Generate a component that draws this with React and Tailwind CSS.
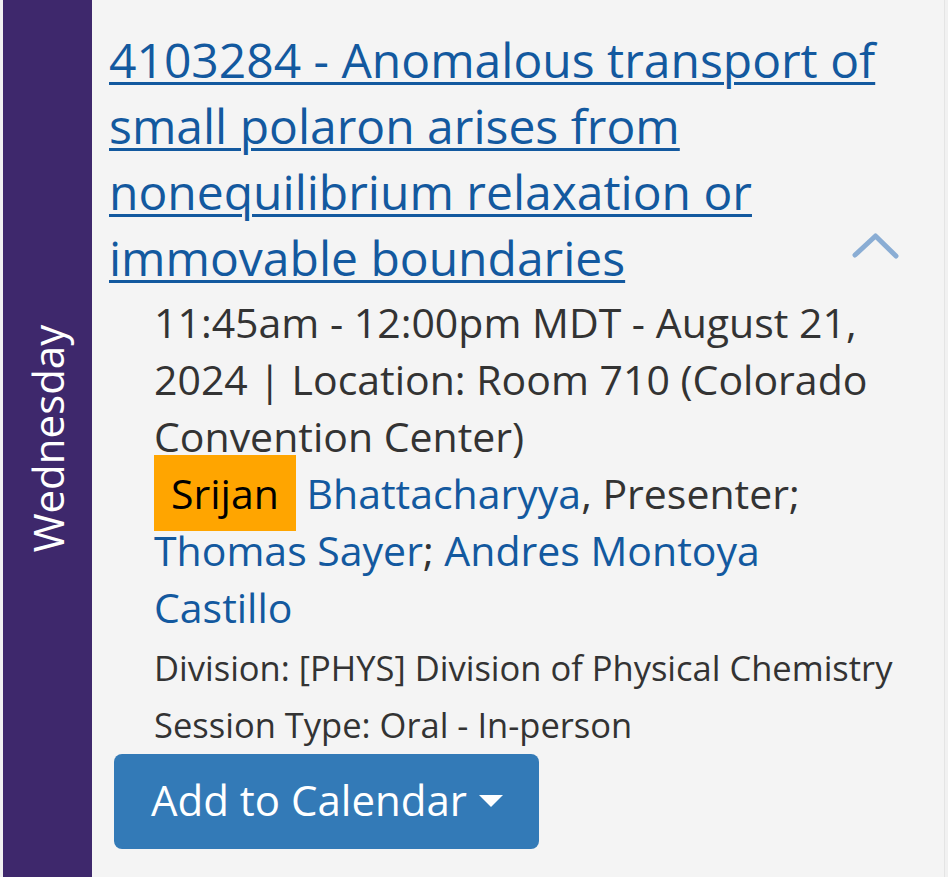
import React from 'react';

function ChevronUp() {
  return (
    <svg width="48" height="28" viewBox="0 0 48 28" className="absolute right-0 top-[205px]">
      <polyline
        points="3,23 23.5,4 44,24"
        fill="none"
        stroke="#8aadd4"
        strokeWidth="5"
        strokeLinecap="round"
        strokeLinejoin="round"
      />
    </svg>
  );
}

function Caret() {
  return (
    <svg width="24" height="12" viewBox="0 0 24 12" className="ml-[12px] mt-[2px]">
      <polygon points="0,0 24,0 12,12" fill="#ffffff" />
    </svg>
  );
}

export default function App() {
  return (
    <div className="flex min-h-[877px] bg-[#f1f1f1] pl-[3px] pr-[3px] font-['Open_Sans',sans-serif] text-[#333333]">
      {/* day rail */}
      <aside className="flex w-[89px] shrink-0 items-center justify-center bg-[#3e286c]">
        <span className="-rotate-90 whitespace-nowrap text-[42px] text-white">Wednesday</span>
      </aside>

      <main className="flex-1 border-r border-[#e4e4e4] bg-[#f4f4f4] pl-[17px] pr-[44px] pt-[27px] pb-[28px]">
        <div className="relative">
          <a
            href="#"
            className="text-[48px] leading-[66px] text-[#13599f] underline decoration-[2.5px] underline-offset-[4px]"
          >
            4103284 - Anomalous transport of small polaron arises from nonequilibrium relaxation or immovable boundaries
          </a>
          <ChevronUp />
        </div>

        <div className="ml-[45px] mt-[3px]">
          <p className="text-[41px] leading-[57px]">
            11:45am - 12:00pm MDT - August 21, 2024 | Location: Room 710 (Colorado Convention Center)
          </p>
          <p className="text-[41px] leading-[57px]">
            <span className="bg-[#ffa500] px-[17px] py-[10px] text-black">Srijan</span>{' '}
            <a href="#" className="text-[#13599f]">Bhattacharyya</a>, Presenter;{' '}
            <a href="#" className="text-[#13599f]">Thomas Sayer</a>;{' '}
            <a href="#" className="text-[#13599f]">Andres Montoya Castillo</a>
          </p>
          <p className="mt-[3px] text-[34.5px] leading-[57px]">Division: [PHYS] Division of Physical Chemistry</p>
          <p className="text-[34.5px] leading-[57px]">Session Type: Oral - In-person</p>
        </div>

        <button
          type="button"
          className="ml-[5px] mt-[1px] flex h-[95px] items-center rounded-[8px] bg-[#337ab7] pl-[37px] pr-[36px] pb-[4px] text-[42px] text-white"
        >
          Add to Calendar
          <Caret />
        </button>
      </main>
    </div>
  );
}
